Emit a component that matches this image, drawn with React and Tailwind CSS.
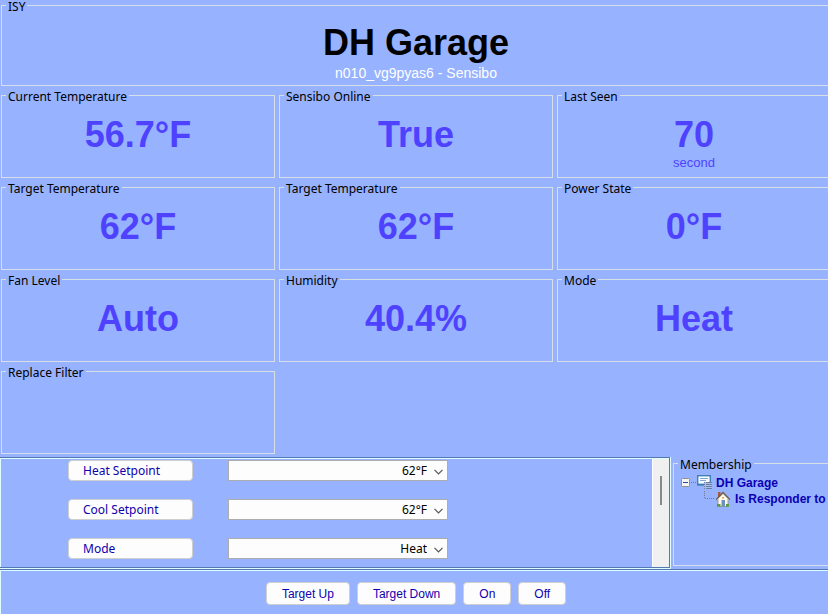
import { clsx } from 'clsx';

const READINGS = [
  { id: 'current', label: 'Current Temperature', value: '56.7°F' },
  { id: 'online', label: 'Sensibo Online', value: 'True' },
  { id: 'seen', label: 'Last Seen', value: '70', unit: 'second' },
  { id: 'target-heat', label: 'Target Temperature', value: '62°F' },
  { id: 'target-cool', label: 'Target Temperature', value: '62°F' },
  { id: 'power', label: 'Power State', value: '0°F' },
  { id: 'fan', label: 'Fan Level', value: 'Auto' },
  { id: 'humidity', label: 'Humidity', value: '40.4%' },
  { id: 'mode', label: 'Mode', value: 'Heat' },
  { id: 'filter', label: 'Replace Filter' },
];

const SETTINGS = [
  { id: 'heat', label: 'Heat Setpoint', value: '62°F', options: ['60°F', '61°F', '62°F', '63°F'] },
  { id: 'cool', label: 'Cool Setpoint', value: '62°F', options: ['60°F', '61°F', '62°F', '63°F'] },
  { id: 'mode', label: 'Mode', value: 'Heat', options: ['Heat', 'Cool', 'Auto'] },
];

const ACTIONS = ['Target Up', 'Target Down', 'On', 'Off'];

function GroupBox({ label, className, children }) {
  return (
    <fieldset className={clsx('min-w-0 border border-[#d5dfe5]', className)}>
      <legend className="ml-1 h-[11px] px-0.5 leading-[13px] whitespace-nowrap">{label}</legend>
      {children}
    </fieldset>
  );
}

function Reading({ label, value, unit }) {
  return (
    <GroupBox label={label} className="h-[88px]">
      <div className="flex flex-col items-center pt-[13px] font-['Liberation_Sans',Arial,sans-serif] text-[#4f42ff]">
        {value && <div className="text-[36px] leading-[42px] font-bold">{value}</div>}
        {unit && <div className="text-[13px] leading-[13px]">{unit}</div>}
      </div>
    </GroupBox>
  );
}

function Setting({ id, label, value, options }) {
  return (
    <div className="flex gap-[35px]">
      <button
        type="button"
        className="h-[21px] w-[125px] rounded-[4px] border border-[#cfcfcf] bg-[#fdfdfd] px-3.5 text-left leading-[18px] text-[#1000b0]"
      >
        {label}
      </button>
      <div className="relative">
        <select
          id={`setting-${id}`}
          aria-label={label}
          defaultValue={value}
          className="block h-[21px] w-[220px] appearance-none border border-[#adadad] bg-[#fdfdfd] pr-5 leading-[18px] text-black [text-align-last:right]"
        >
          {options.map(o => <option key={o}>{o}</option>)}
        </select>
        <svg
          className="pointer-events-none absolute top-[9px] right-[5px] h-[6px] w-[9px]"
          viewBox="0 0 9 6"
          fill="none"
          stroke="#555"
          strokeWidth="1.2"
        >
          <path d="M0.5 0.8 4.5 4.8 8.5 0.8" />
        </svg>
      </div>
    </div>
  );
}

function Expander() {
  return (
    <svg width="16" height="16" viewBox="0 0 16 16" className="shrink-0">
      <path d="M11 7.5h5" stroke="#6f7896" strokeDasharray="1 1" />
      <rect x="1.5" y="3.5" width="8" height="8" rx="1" fill="#f7f5f0" stroke="#8f8f92" />
      <path d="M3 7.5h5" stroke="#2b4a9c" />
    </svg>
  );
}

function NodeIcon() {
  return (
    <svg width="16" height="16" viewBox="0 0 16 16" className="shrink-0">
      <rect x="1.7" y="0.7" width="12.6" height="8.600" fill="#fafdff" stroke="#3f7fb4" strokeWidth="1.400" />
      <path d="M4 3.5h8M4 5.5h6" stroke="#7fa6dc" />
      <path d="M1 10.500h7" stroke="#5d8fc2" />
      <path d="M8 7h8v7H8z" fill="#a9bde6" />
      <path d="M8 7.500h1M10 7.500h6M8 9.500h1M10 9.500h6M8 11.500h1M10 11.500h6M8 13.500h1M10 13.500h6" stroke="#6c7fa6" />
    </svg>
  );
}

function HouseIcon() {
  return (
    <svg width="16" height="16" viewBox="0 0 16 16" className="shrink-0">
      <path d="M3 1h2.500v5H3z" fill="#a85a3c" />
      <path d="M3 8 8 3l5 5v7.500H3z" fill="#fdfaf0" stroke="#8b8a80" strokeWidth="0.800" />
      <path d="M1.200 8.800 8 1.500l6.800 7.300" fill="none" stroke="#6b5748" strokeWidth="1.400" />
      <path d="M2.200 8.800 8 2.800l5.800 6" fill="none" stroke="#e9dfc4" strokeWidth="0.800" />
      <path d="M6.500 9h3.500v6.500H6.500z" fill="#6e93bb" />
      <path d="M7 6h2v1.500H7z" fill="#d9a94e" />
      <path d="M2 13h3.500v2.800H2zM11 13h3v2.800h-3z" fill="#5f9a48" />
    </svg>
  );
}

function MembershipTree() {
  return (
    <div className="pt-1.5 pl-1.5 font-['Liberation_Sans',Arial,sans-serif] leading-4 font-bold whitespace-nowrap text-[#0a00b4]">
      <div className="flex">
        <Expander />
        <NodeIcon />
        <span className="ml-1">DH Garage</span>
      </div>
      <div className="flex pl-5">
        <svg width="15" height="16" viewBox="0 0 15 16" className="shrink-0">
          <path d="M4.500 0v8M5 7.500h10" fill="none" stroke="#6f7896" strokeDasharray="1 1" />
        </svg>
        <HouseIcon />
        <span className="ml-1">Is Responder to</span>
      </div>
    </div>
  );
}

export default function App() {
  return (
    <div className="min-h-screen overflow-hidden bg-[#97b2ff] font-['Noto_Sans',Tahoma,sans-serif] text-[12px] text-black">
      {/* Columns run slightly past the right edge of the window */}
      <div className="-mr-[3px] flex min-h-screen flex-col">
        <header className="pl-px">
          <GroupBox label="ISY" className="h-[86px]">
            <div className="flex flex-col items-center pt-[11px] font-['Liberation_Sans',Arial,sans-serif]">
              <h1 className="text-[36px] leading-[42px] font-bold">DH Garage</h1>
              <p className="text-[14px] leading-[18px] text-white">n010_vg9pyas6 - Sensibo</p>
            </div>
          </GroupBox>
        </header>

        <main className="grid grid-cols-3 gap-1 pt-1 pb-[3px] pl-px">
          {READINGS.map(r => <Reading key={r.id} {...r} />)}
        </main>

        <div className="flex">
          {/* Settings */}
          <div className="flex-1 border-r border-b border-[#dffcff]">
            <div className="border-t border-r border-b border-[#5378b4]">
              <div className="flex border-t border-[#dffcff]">
                <div className="flex h-[108px] flex-1 flex-col gap-[18px] overflow-hidden border-l border-[#dffcff] pt-px pl-[67px]">
                  {SETTINGS.map(s => <Setting key={s.id} {...s} />)}
                </div>
                <div className="flex w-[17px] justify-center border-l border-white bg-[#f0f0f0] pt-[17px]">
                  <div className="h-[29px] w-0.5 bg-[#8a8a8a]" />
                </div>
              </div>
            </div>
          </div>

          {/* Membership */}
          <aside className="w-[160px] pt-px pl-0.5">
            <GroupBox label="Membership" className="h-[108px]">
              <MembershipTree />
            </GroupBox>
          </aside>
        </div>

        <footer className="flex-1 border-t border-[#5378b4]">
          <div className="flex justify-center gap-[7px] border-l border-t border-[#dffcff] pt-[11px] pb-2.5 font-['Liberation_Sans',Arial,sans-serif]">
            {ACTIONS.map(a => (
              <button
                key={a}
                type="button"
                className="h-[23px] rounded-[4px] border border-[#cfcfcf] bg-[#fdfdfd] px-[15px] text-[#1000b0]"
              >
                {a}
              </button>
            ))}
          </div>
        </footer>
      </div>
    </div>
  );
}
